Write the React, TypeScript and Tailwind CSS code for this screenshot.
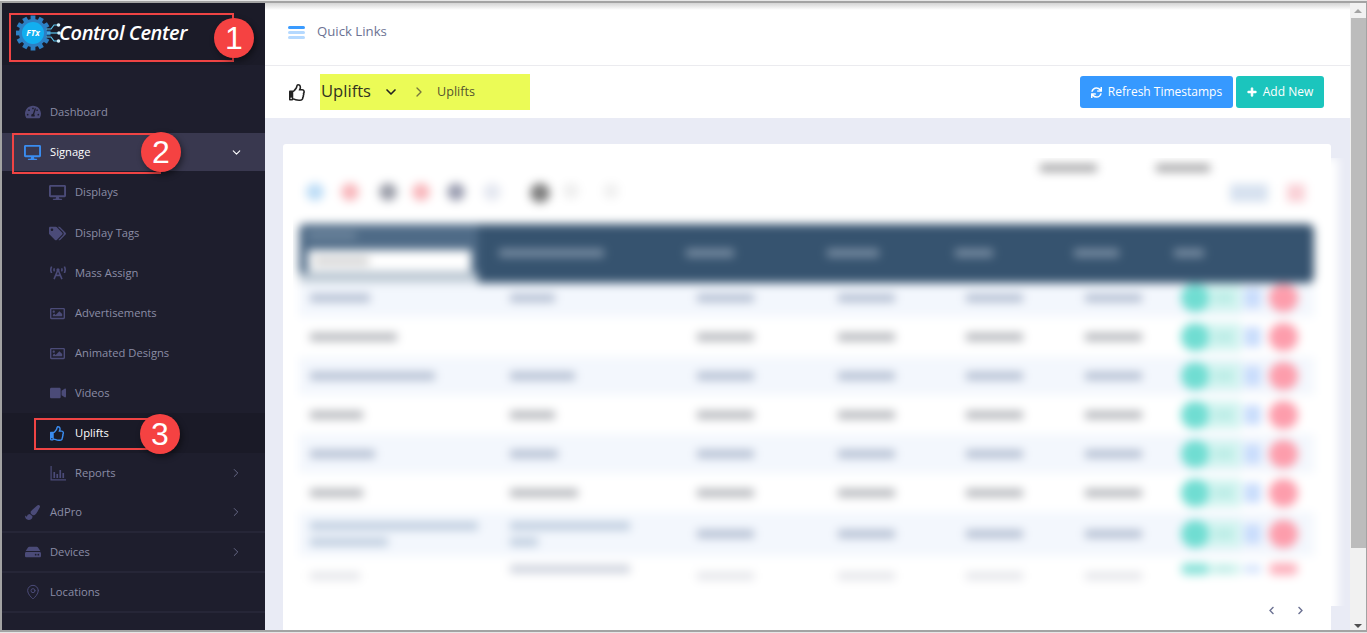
import React from "react";
import {
  FaTachometerAlt, FaDesktop, FaTags, FaBroadcastTower, FaRegImage, FaVideo, FaRegThumbsUp,
  FaPaintBrush, FaHdd, FaSync, FaPlus, FaChevronLeft, FaChevronRight,
} from "react-icons/fa";
import { ChevronDown, ChevronRight, MapPin } from "lucide-react";

const ic = "text-[#4b4b78]";

function Logo() {
  const teeth = Array.from({ length: 12 }, (_, i) => i * 30);
  return (
    <div className="flex items-center">
      <svg width="46" height="36" viewBox="0 0 46 36" className="shrink-0">
        <g transform="translate(17 18)">
          {teeth.map((a) => (
            <rect key={a} x="-2.4" y="-17.5" width="4.8" height="6" fill="#2c80c4" transform={`rotate(${a})`} />
          ))}
          <circle r="14" fill="#2c80c4" />
          <circle r="11" fill="#12aef0" />
          <text x="0" y="3" textAnchor="middle" fontSize="8.5" fontWeight="700" fontStyle="italic" fill="#ffffff" fontFamily="'Open Sans', sans-serif">FTx</text>
        </g>
        <g stroke="#5cc6ef" strokeWidth="1.2" fill="none">
          <path d="M30 14 H35 L38 10 H41" />
          <path d="M31 18 H42" />
          <path d="M30 22 H35 L38 26 H41" />
        </g>
        <circle cx="42.5" cy="10" r="1.8" fill="#d6f2fc" />
        <circle cx="43" cy="18" r="1.8" fill="#d6f2fc" />
        <circle cx="42.5" cy="26" r="1.8" fill="#d6f2fc" />
      </svg>
      <span className="-ml-[3px] text-[20px] font-semibold italic leading-none text-white tracking-[-0.4px]">Control Center</span>
    </div>
  );
}

function ReportsIcon() {
  return (
    <svg width="16" height="15" viewBox="0 0 16 15" className={ic} fill="currentColor">
      <path d="M0.5 0 H1.7 V13.3 H16 V14.5 H0.5 Z" />
      <rect x="3.4" y="6" width="1.7" height="6" />
      <rect x="6.4" y="8" width="1.7" height="4" />
      <rect x="9.4" y="4" width="1.7" height="8" />
      <rect x="12.4" y="7" width="1.7" height="5" />
    </svg>
  );
}

function NavRow({
  icon, label, level = 0, state = "normal", arrow, sep = false, h = 40,
}: {
  icon: React.ReactNode; label: string; level?: 0 | 1; state?: "normal" | "open" | "active";
  arrow?: "right" | "down"; sep?: boolean; h?: number;
}) {
  const bg = state === "open" ? "bg-[#39384f]" : state === "active" ? "bg-[#1a1a27]" : "";
  const txt = state === "normal" ? "text-[#8b8da6]" : "text-white";
  return (
    <div
      className={`flex items-center ${bg} ${level === 1 ? "pl-[46px]" : "pl-[21px]"} ${sep ? "border-b-2 border-[#262637]" : ""}`}
      style={{ height: h }}
    >
      <span className="flex w-[19px] justify-center">{icon}</span>
      <span className={`ml-[8px] text-[11.2px] leading-none ${txt}`}>{label}</span>
      {arrow === "right" && <ChevronRight size={14} strokeWidth={1.5} className="ml-auto mr-[22px] text-[#6f7090]" />}
      {arrow === "down" && <ChevronDown size={13} strokeWidth={2} className="ml-auto mr-[22px] text-white" />}
    </div>
  );
}

function Sidebar() {
  return (
    <aside className="flex w-[263px] shrink-0 flex-col bg-[#1e1e2d]">
      <div className="flex h-[62px] items-center bg-[#1b1b28] pl-[14px] pb-[3px]"><Logo /></div>
      <div className="h-[26px]" />
      <NavRow icon={<FaTachometerAlt size={16} className={ic} />} label="Dashboard" h={42} />
      <NavRow icon={<FaDesktop size={17} className="text-[#3a8cf0]" />} label="Signage" state="open" arrow="down" h={38} />
      <NavRow level={1} icon={<FaDesktop size={17} className={ic} />} label="Displays" h={42} />
      <NavRow level={1} icon={<FaTags size={17} className={ic} />} label="Display Tags" />
      <NavRow level={1} icon={<FaBroadcastTower size={16} className={ic} />} label="Mass Assign" />
      <NavRow level={1} icon={<FaRegImage size={15} className={ic} />} label="Advertisements" />
      <NavRow level={1} icon={<FaRegImage size={15} className={ic} />} label="Animated Designs" />
      <NavRow level={1} icon={<FaVideo size={16} className={ic} />} label="Videos" />
      <NavRow level={1} icon={<FaRegThumbsUp size={15} className="text-[#3a8cf0]" />} label="Uplifts" state="active" />
      <NavRow level={1} icon={<ReportsIcon />} label="Reports" arrow="right" />
      <NavRow icon={<FaPaintBrush size={15} className={ic} />} label="AdPro" arrow="right" sep />
      <NavRow icon={<FaHdd size={16} className={ic} />} label="Devices" arrow="right" sep />
      <NavRow icon={<MapPin size={16} strokeWidth={1.5} className={ic} />} label="Locations" sep />
    </aside>
  );
}

const rows: { h: number; c1: number[]; c2: number[]; last?: boolean }[] = [
  { h: 34, c1: [60], c2: [45] },
  { h: 40, c1: [87], c2: [] },
  { h: 38, c1: [125], c2: [65] },
  { h: 39, c1: [53], c2: [45] },
  { h: 39, c1: [65], c2: [48] },
  { h: 39, c1: [53], c2: [68] },
  { h: 44, c1: [168, 78], c2: [120, 28] },
  { h: 40, c1: [50], c2: [120], last: true },
];
const cols = "grid grid-cols-[200px_187px_141px_128px_119px_100px_1fr] px-[11px]";

function Bar({ w, color }: { w: number; color: string }) {
  return <div className="h-[8px] rounded-[1px]" style={{ width: w, background: color }} />;
}

function Lines({ ws, color }: { ws: number[]; color: string }) {
  return (
    <div className="flex flex-col gap-[8px]">
      {ws.map((w, i) => <Bar key={i} w={w} color={color} />)}
    </div>
  );
}

function DataRow({ r, i }: { r: (typeof rows)[number]; i: number }) {
  const stripe = i % 2 === 0;
  const color = r.last ? "#e4e5e9" : stripe ? "#b2bdd1" : "#b4b6bb";
  const dates = [57, 57, 57, 57];
  const ah = r.last ? "h-[12px]" : "h-[28px]";
  return (
    <div
      className={`${cols} items-center ${stripe && !r.last ? "bg-[#f3f7fd]" : ""} ${i === 0 ? "pb-[4px]" : ""}`}
      style={{ height: r.h }}
    >
      <Lines ws={r.c1} color={i === 6 ? "#bccbdd" : color} />
      <div className={r.last ? "-mt-[14px]" : ""}><Lines ws={r.c2} color={i === 6 ? "#bccbdd" : r.last ? "#ccd1dc" : color} /></div>
      {dates.map((w, j) => <Bar key={j} w={w} color={color} />)}
      <div className={`flex items-center ${r.last ? "-mt-[14px] opacity-80" : ""}`}>
        <div className={`flex w-[60px] -ml-[4px] items-center rounded-l-full bg-[#d2f4f0] ${ah}`}>
          <div className={`w-[28px] rounded-full bg-[#70ddd2] ${ah}`} />
          <div className="ml-[6px] h-[8px] w-[18px] bg-[#b5eae3]" />
        </div>
        <div className={`ml-[3px] w-[17px] bg-[#c8dcfc] ${r.last ? "h-[8px]" : "h-[20px]"}`} />
        <div className={`ml-[8px] w-[29px] rounded-full bg-[#fd9dac] ${ah}`} />
      </div>
    </div>
  );
}

function BlurredTable() {
  const dots = [
    ["#bcdcf6", 18], ["#f8b6bb", 18], ["#9a9da8", 18], ["#f8b6bb", 18], ["#9a9db0", 18],
    ["#e4e7f0", 18], ["#7e7e7e", 20], ["#eeeeee", 16], ["#f0f0f0", 16],
  ] as const;
  const xs = [14, 49, 87, 120, 155, 191, 238, 271, 311];
  return (
    <div className="-mr-[14px] ml-[10px] h-[448px] overflow-hidden">
      <div className="h-[460px] w-[1045px] bg-white blur-[5px]">
        <div className="flex h-[20px] items-center justify-end gap-[59px] pr-[128px]">
          <Bar w={57} color="#a8a8aa" />
          <Bar w={54} color="#a8a8aa" />
        </div>
        <div className="flex h-[46px] items-center pb-[16px] pl-[6px]">
          <div className="flex">
            {dots.map(([c, s], i) => (
              <div
                key={i}
                className="rounded-full"
                style={{ width: s, height: s, background: c, marginLeft: i === 0 ? 7 : xs[i] - xs[i - 1] - dots[i - 1][1] }}
              />
            ))}
          </div>
          <div className="ml-auto mr-[33px] flex items-center gap-[19px]">
            <div className="h-[18px] w-[38px] bg-[#d6e1ef]" />
            <div className="h-[18px] w-[18px] bg-[#fad0d6]" />
          </div>
        </div>
        <div className="mx-[6px] w-[1015px]">
          <div className="relative grid h-[59px] grid-cols-[179px_1fr] overflow-hidden rounded-[6px] bg-[#36536f]">
            <div className="flex flex-col bg-[#4f6b87] pl-[9px] pr-[7px]">
              <div className="mt-[9px] h-[5px] w-[48px] bg-[#7d93a8]" />
              <div className="mt-[12px] h-[22px] bg-white pl-[6px] pt-[7px]"><div className="h-[8px] w-[55px] bg-[#d0d0d0]" /></div>
              <div className="-mx-[9px] -mr-[7px] mt-[1px] h-[12px] bg-[#c3ced8]" />
            </div>
            <div className="grid grid-cols-[21px_187px_141px_128px_119px_100px_1fr] items-center pb-[4px]">
              <div />
              {[105, 48, 52, 38, 45, 30].map((w, i) => <Bar key={i} w={w} color="#7a8ea3" />)}
            </div>
          </div>
          {rows.map((r, i) => <DataRow key={i} r={r} i={i} />)}
        </div>
      </div>
    </div>
  );
}

function Badge({ n, cls }: { n: number; cls: string }) {
  return (
    <div className={`absolute flex h-[40px] w-[40px] items-center justify-center rounded-full bg-[#f54242] text-[32px] leading-none text-white shadow-[2px_3px_6px_rgba(0,0,0,0.45)] [font-family:'Liberation_Sans',sans-serif] ${cls}`}>
      {n}
    </div>
  );
}

export default function App() {
  return (
    <div className="relative h-[633px] w-[1367px] overflow-hidden bg-[#e6e6e6] [font-family:'Open_Sans',sans-serif]">
      <div className="mt-px flex h-[631px] border-y-2 border-l-2 border-[#a3a3a3]">
        <Sidebar />
        <main className="flex min-w-0 flex-1 flex-col bg-[#e9ebf5]">
          <div className="h-[7px] bg-gradient-to-b from-[#d4d4d4] to-white" />
          <div className="flex h-[56px] items-center border-b border-[#ebebef] bg-white pb-[11px] pl-[23px]">
            <div className="flex w-[17px] flex-col gap-[2px]">
              <div className="h-[3px] rounded-full bg-[#3a9bff]" />
              <div className="h-[3px] rounded-full bg-[#b5d9ff]" />
              <div className="h-[3px] rounded-full bg-[#b5d9ff]" />
            </div>
            <span className="ml-[12px] text-[13.2px] text-[#6c7293]">Quick Links</span>
          </div>
          <div className="flex h-[52px] items-center bg-white pl-[24px] pr-[26px]">
            <FaRegThumbsUp size={17} className="text-[#222222]" />
            <div className="ml-[14px] flex h-[36px] w-[210px] items-center bg-[#ebfb56] pl-[1px]">
              <span className="-mt-[2px] text-[16.6px] text-[#33331f]">Uplifts</span>
              <ChevronDown size={16} strokeWidth={2.5} className="ml-[12px] text-[#222222]" />
              <ChevronRight size={16} strokeWidth={2} className="ml-[12px] text-[#77773c]" />
              <span className="ml-[10px] text-[12.6px] text-[#55552f]">Uplifts</span>
            </div>
            <div className="ml-auto flex gap-[3px]">
              <button className="flex h-[32px] w-[153px] items-center justify-center gap-[6px] rounded-[3px] bg-[#3699ff] text-[12px] text-white">
                <FaSync size={11} />Refresh Timestamps
              </button>
              <button className="flex h-[32px] w-[88px] items-center justify-center gap-[6px] rounded-[3px] bg-[#1bc5bd] text-[12px] text-white">
                <FaPlus size={10} className="stroke-white stroke-[30]" />Add New
              </button>
            </div>
          </div>
          <div className="min-h-0 flex-1 pl-[18px] pr-[19px] pt-[26px]">
            <div className="h-full rounded-t-[3px] bg-white pt-[14px]">
              <BlurredTable />
              <div className="flex justify-end gap-[20px] pr-[26px] text-[#6c7293]">
                <FaChevronLeft size={9} />
                <FaChevronRight size={9} />
              </div>
            </div>
          </div>
        </main>
        <div className="flex w-[16px] shrink-0 flex-col items-center bg-[#f1f1f1]">
          <div className="flex h-[15px] items-center justify-center">
            <div className="h-0 w-0 border-x-[4px] border-b-[4px] border-x-transparent border-b-[#a3a3a3]" />
          </div>
          <div className="h-[530px] w-[15px] bg-[#bcbcbc]" />
          <div className="flex-1" />
          <div className="mb-[2px] h-0 w-0 border-x-[4px] border-t-[4px] border-x-transparent border-t-[#505050]" />
        </div>
        <div className="w-px bg-[#a3a3a3]" />
      </div>

      <div className="absolute left-[9px] top-[13px] h-[49px] w-[225px] border-2 border-[#ef4444]" />
      <div className="absolute left-[12px] top-[133px] h-[41px] w-[149px] border-2 border-[#ef4444]" />
      <div className="absolute left-[34px] top-[418px] h-[32px] w-[115px] border-2 border-[#ef4444]" />
      <Badge n={1} cls="left-[214px] top-[18px]" />
      <Badge n={2} cls="left-[141px] top-[132px]" />
      <Badge n={3} cls="left-[140px] top-[414px]" />
    </div>
  );
}
